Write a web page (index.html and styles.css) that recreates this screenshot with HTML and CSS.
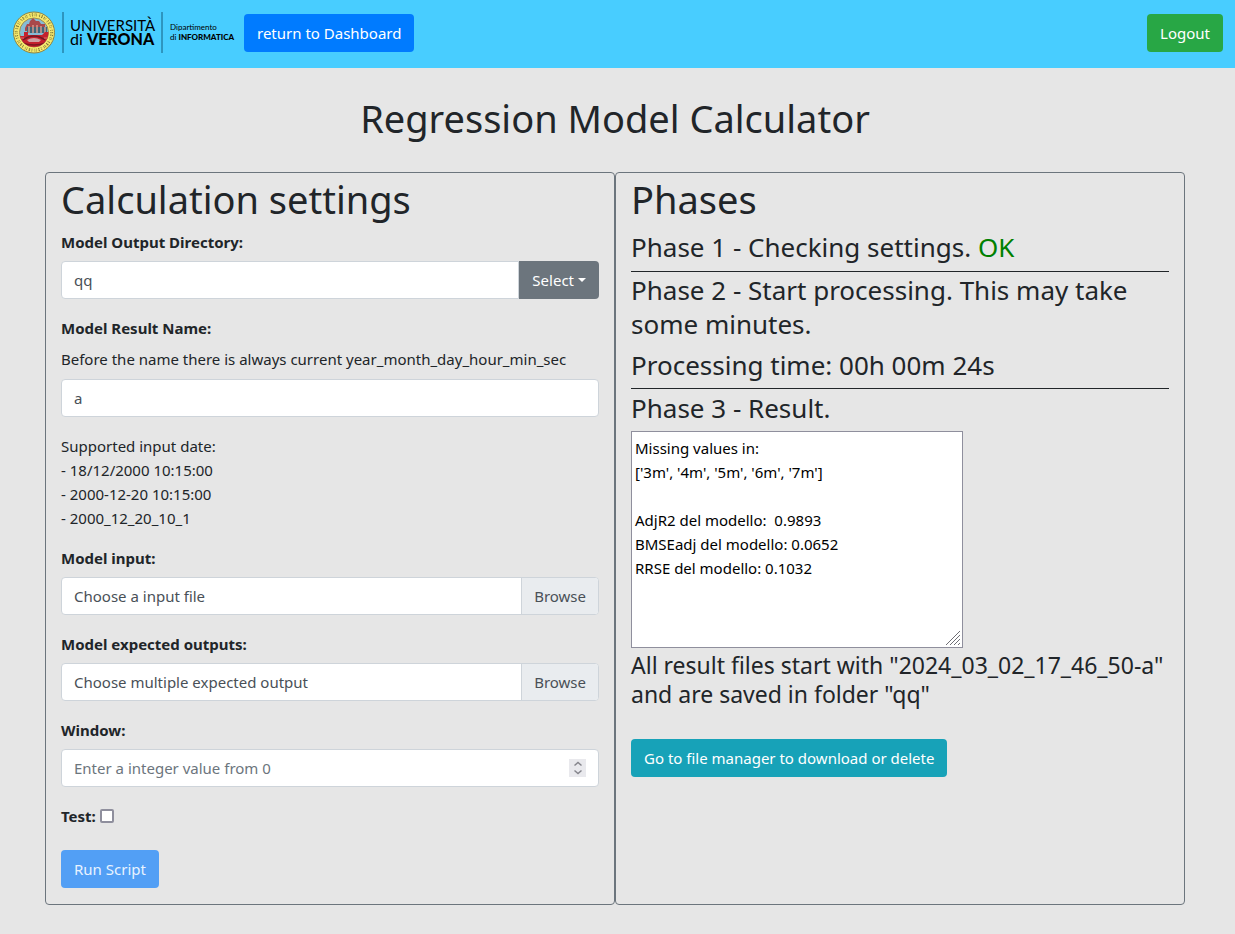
FILE: index.html
```html
<!DOCTYPE html>
<html lang="en">
<head>
<meta charset="utf-8">
<meta name="viewport" content="width=device-width, initial-scale=1">
<title>Regression Model Calculator</title>
<link rel="stylesheet" href="styles.css">
</head>
<body>
<header class="navbar">
  <div class="navbar-start">
    <svg class="logo" width="228" height="44" viewBox="0 0 228 44" role="img" aria-label="Università di Verona, Dipartimento di Informatica">
      <defs>
        <clipPath id="disc"><circle cx="22" cy="21.500" r="14.500"/></clipPath>
      </defs>
      <circle cx="22" cy="21.500" r="20.500" fill="#f6ea6e" stroke="#8f8443" stroke-width="1"/>
      <circle cx="22" cy="21.500" r="17.700" fill="none" stroke="#7d7437" stroke-width="3" stroke-dasharray="0.800 1.500 1.200 1.700 0.700 0.900 0.600 2.400"/>
      <circle cx="22" cy="21.500" r="17.700" fill="none" stroke="#e6d962" stroke-width="1" stroke-dasharray="1.500 1.200"/>
      <circle cx="22" cy="21.500" r="14.500" fill="#86bcd6" stroke="#a58f45" stroke-width="1"/>
      <g clip-path="url(#disc)">
        <path d="M13 17L15 13H17L18 10L21 7L24 10H27L29 13H33V20H13Z" fill="#a8484b"/>
        <path d="M15 16H35V22H15Z" fill="#3f6678"/>
        <path d="M17 15V22M21 14V22M25 14V22M29 15V22M33 16V22" stroke="#d49a8c" stroke-width="1.500"/>
        <path d="M6 25H12V21H16V24H30L33 21H38V30L34 36H9Z" fill="#c4202d"/>
        <path d="M11 29Q22 21 33 29" fill="none" stroke="#6e1a24" stroke-width="1.500"/>
        <path d="M15 29Q22 25 29 29L27 31H17Z" fill="#cf9fa2"/>
        <path d="M10 32Q22 36 34 32" fill="none" stroke="#7a1721" stroke-width="1.500"/>
        <path d="M8 27H12M32 27H36" stroke="#e16b6b" stroke-width="1"/>
      </g>
      <path d="M51 1V42M150 1V42" stroke="#155f80" stroke-width="1"/>
      <text class="logo-name" x="58" y="20">UNIVERSITÀ</text>
      <text class="logo-city" x="58" y="34">di <tspan class="logo-strong">VERONA</tspan></text>
      <text class="logo-dept" x="158" y="19">Dipartimento</text>
      <text class="logo-dept" x="158" y="29">di <tspan class="logo-strong">INFORMATICA</tspan></text>
    </svg>
    <a class="btn btn-primary" href="#">return to Dashboard</a>
  </div>
  <button class="btn btn-success" type="button">Logout</button>
</header>

<main class="page">
  <h1 class="title">Regression Model Calculator</h1>
  <div class="panels">
    <section class="panel">
      <h1 class="heading">Calculation settings</h1>
      <form class="form">
        <div class="field">
          <label class="label" for="dir">Model Output Directory:</label>
          <div class="group">
            <input class="control group-input" id="dir" type="text" value="qq">
            <button class="btn btn-secondary" type="button">Select<span class="caret"></span></button>
          </div>
        </div>
        <div class="field">
          <label class="label" for="name">Model Result Name:</label>
          <span class="hint">Before the name there is always current year_month_day_hour_min_sec</span>
          <input class="control" id="name" type="text" value="a">
        </div>
        <p class="note">Supported input date:<br>- 18/12/2000 10:15:00<br>- 2000-12-20 10:15:00<br>- 2000_12_20_10_1</p>
        <div class="field">
          <label class="label" for="input">Model input:</label>
          <div class="file">
            <input class="file-input" id="input" type="file">
            <span class="file-name">Choose a input file</span>
            <span class="file-browse">Browse</span>
          </div>
        </div>
        <div class="field">
          <label class="label" for="outputs">Model expected outputs:</label>
          <div class="file">
            <input class="file-input" id="outputs" type="file" multiple>
            <span class="file-name">Choose multiple expected output</span>
            <span class="file-browse">Browse</span>
          </div>
        </div>
        <div class="field">
          <label class="label" for="window">Window:</label>
          <div class="number">
            <input class="control number-input" id="window" type="number" min="0" placeholder="Enter a integer value from 0">
            <svg class="spinner" width="17" height="18" viewBox="0 0 17 18" aria-hidden="true">
              <path d="M0 0H17V18H0Z" fill="#e9e9ed"/>
              <path d="M5.500 6.500L9 3.500L12.500 6.500M5.500 11.500L9 14.500L12.500 11.500" fill="none" stroke="#85858c" stroke-width="1.500"/>
            </svg>
          </div>
        </div>
        <div class="check">
          <label class="label" for="test">Test:</label>
          <input class="checkbox" id="test" type="checkbox">
        </div>
        <button class="btn btn-run" type="submit" disabled>Run Script</button>
      </form>
    </section>

    <section class="panel">
      <h1 class="heading">Phases</h1>
      <h3 class="phase phase-ruled">Phase 1 - Checking settings. <span class="ok">OK</span></h3>
      <div class="step">
        <h3 class="phase">Phase 2 - Start processing. This may take some minutes.</h3>
        <h3 class="phase">Processing time: 00h 00m 24s</h3>
      </div>
      <h3 class="phase">Phase 3 - Result.</h3>
      <div class="result">
        <textarea class="result-text" aria-label="Result">Missing values in:
['3m', '4m', '5m', '6m', '7m']

AdjR2 del modello:  0.9893
BMSEadj del modello: 0.0652
RRSE del modello: 0.1032</textarea>
        <svg class="grip" width="14" height="14" viewBox="0 0 14 14" aria-hidden="true">
          <path d="M0 14L14 0M4 14L14 4M8 14L14 8M12 14L14 12" stroke="#6f6f75" stroke-width="1"/>
        </svg>
      </div>
      <h4 class="saved">All result files start with "2024_03_02_17_46_50-a" and are saved in folder "qq"</h4>
      <a class="btn btn-info" href="#">Go to file manager to download or delete</a>
    </section>
  </div>
</main>
</body>
</html>
```
FILE: styles.css
```css
*, *::before, *::after { box-sizing: border-box; }

body {
  margin: 0;
  background: #e6e6e6;
  color: #212529;
  font-family: "Noto Sans", "Open Sans", sans-serif;
  font-size: 15px;
  line-height: 24px;
}

h1, h3, h4, p { margin: 0; font-weight: 400; }
input, button, textarea { font: inherit; }

.navbar {
  display: flex;
  align-items: center;
  justify-content: space-between;
  padding: 14px 12px 16px;
  background: #48cdff;
}
.navbar-start { display: flex; align-items: center; gap: 4px; height: 38px; }
.logo { display: block; font-family: Lato, sans-serif; }
.logo-name { font-size: 15px; }
.logo-city { font-size: 16px; }
.logo-dept { font-size: 8px; }
.logo-strong { font-weight: 900; }

.btn {
  display: inline-block;
  padding: 6px 12px;
  border: 1px solid transparent;
  border-radius: 4px;
  color: #fff;
  text-decoration: none;
  white-space: nowrap;
}
.btn-primary { background: #007bff; }
.btn-success { background: #28a745; }
.btn-secondary { background: #6c757d; border-radius: 0 4px 4px 0; }
.btn-run { background: #529ff5; color: #e8f3ff; }
.btn-info { margin-top: 30px; background: #17a2b8; }
.caret {
  display: inline-block;
  margin-left: 4px;
  vertical-align: 4px;
  border: 4px solid transparent;
  border-top-color: #fff;
  border-bottom: 0;
}

.page { padding: 26px 5px 28px 0; }
.title { font-size: 38px; line-height: 48px; text-align: center; }
.panels {
  display: grid;
  grid-template-columns: 1fr 1fr;
  max-width: 1140px;
  margin: 30px auto 0;
}
.panel {
  min-width: 0;
  padding: 2px 15px 16px;
  border: 1px solid #6c757d;
  border-radius: 4px;
}
.heading { margin-bottom: 7px; font-size: 38px; line-height: 48px; }

.field { display: flex; flex-direction: column; gap: 7px; margin-bottom: 17px; }
.label { font-size: 15px; font-weight: 700; }
.hint { margin-bottom: 1px; }
.control {
  width: 100%;
  height: 38px;
  padding: 6px 12px;
  border: 1px solid #ced4da;
  border-radius: 4px;
  background: #fff;
  color: #495057;
}
.control::placeholder { color: #6c757d; opacity: 1; }
.group { display: flex; }
.group-input { flex: 1; min-width: 0; border-radius: 4px 0 0 4px; }
.note { margin-bottom: 16px; }

.file {
  position: relative;
  display: flex;
  height: 38px;
  border: 1px solid #ced4da;
  border-radius: 4px;
  background: #fff;
  color: #495057;
  overflow: hidden;
}
.file-input { position: absolute; inset: 0; width: 100%; opacity: 0; }
.file-name { flex: 1; padding: 6px 12px; }
.file-browse { padding: 6px 12px; border-left: 1px solid #ced4da; background: #e9ecef; }

.number { position: relative; }
.number-input { appearance: textfield; display: block; }
.spinner { position: absolute; top: 10px; right: 13px; pointer-events: none; }

.check { display: flex; align-items: center; gap: 4px; margin-bottom: 22px; }
.checkbox {
  appearance: none;
  width: 14px;
  height: 14px;
  margin: 0;
  border: 2px solid #8f8f9d;
  border-radius: 2px;
  background: #fff;
}
.checkbox:checked { background: #007bff; }

.phase { font-size: 26px; line-height: 34px; }
.phase + .phase { margin-top: 7px; }
.phase-ruled { padding-bottom: 7px; border-bottom: 1px solid #212529; }
.step { margin-bottom: 2px; padding: 1px 0 6px; border-bottom: 1px solid #212529; }
.ok { color: #008000; }

.result { position: relative; width: 332px; max-width: 100%; margin: 6px 0 3px; }
.result-text {
  display: block;
  width: 100%;
  height: 217px;
  padding: 4px 3px;
  border: 1px solid #8f8f9d;
  background: #fff;
  color: #000;
}
.result-text::-webkit-resizer { display: none; }
.grip { position: absolute; right: 3px; bottom: 3px; pointer-events: none; }
.saved { font-size: 23px; line-height: 29px; }
```
